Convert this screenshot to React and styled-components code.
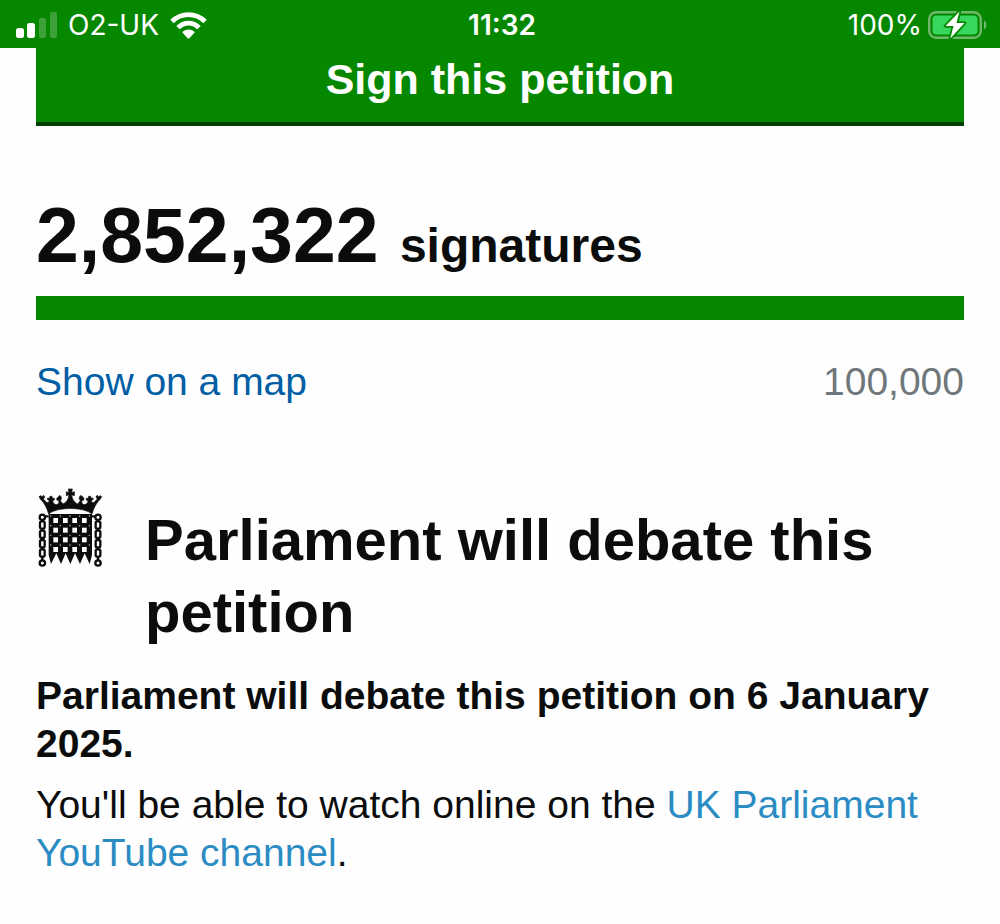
import React from "react";
import styled, { createGlobalStyle } from "styled-components";

const GlobalStyle = createGlobalStyle`
  *, *::before, *::after { box-sizing: border-box; }
  body {
    margin: 0;
    background: #fefefe;
    color: #0b0c0c;
    font-family: "Liberation Sans", Arial, Helvetica, sans-serif;
    font-size: 39px;
    line-height: 48px;
  }
`;

const StatusBar = styled.header`
  display: grid;
  grid-template-columns: 1fr auto 1fr;
  align-items: center;
  height: 48px;
  padding: 2px 12px 0 16px;
  background: #058700;
  color: #fff;
  font-family: Inter, "Liberation Sans", sans-serif;
  font-size: 28px;
  line-height: 32px;
`;

const StatusGroup = styled.div`
  display: flex;
  align-items: center;
  justify-content: ${(p) => (p.$end ? "flex-end" : "flex-start")};
  gap: ${(p) => (p.$end ? 6 : 11)}px;

  svg { display: block; flex: none; }
`;

const Clock = styled.time`
  font-weight: 600;
`;

const Page = styled.main`
  padding: 0 36px 40px;
`;

const SignButton = styled.button`
  display: block;
  width: 100%;
  padding: 6px 0 18px;
  border: 0;
  border-bottom: 4px solid #033f00;
  border-radius: 0;
  background: #058700;
  color: #fff;
  font: bold 43px/50px "Liberation Sans", Arial, sans-serif;
  cursor: pointer;
`;

const SignatureCount = styled.p`
  margin: 64px 0 5px;
  font-size: 48px;
  font-weight: bold;
  line-height: 90px;
`;

const Total = styled.span`
  margin-right: 8px;
  font-size: 77px;
`;

const Progress = styled.div`
  height: 24px;
  background: #058700;
`;

const ProgressDetails = styled.div`
  display: flex;
  justify-content: space-between;
  margin-top: 38px;
`;

const Threshold = styled.span`
  color: #6f777b;
`;

const Link = styled.a`
  color: ${(p) => (p.$light ? "#2b8cc4" : "#005ea5")};
  text-decoration: none;
`;

const DebateHeader = styled.div`
  display: flex;
  align-items: flex-start;
  gap: 41px;
  margin-top: 82px;

  svg { flex: none; }
`;

const Heading = styled.h2`
  margin: 16px 0 0;
  font-size: 58px;
  line-height: 72px;
`;

const Paragraph = styled.p`
  margin: ${(p) => (p.$lead ? 24 : 13)}px 0 0;
  font-weight: ${(p) => (p.$lead ? "bold" : "normal")};
`;

const SignalIcon = () => (
  <svg width="41" height="26" viewBox="0 0 41 26" fill="#fff" aria-hidden="true">
    <rect x="0" y="16" width="8" height="10" rx="2.5" />
    <rect x="11" y="11" width="8" height="15" rx="2.5" />
    <rect x="23" y="6" width="7" height="20" rx="2" opacity=".22" />
    <rect x="34" y="0" width="7" height="26" rx="2" opacity=".22" />
  </svg>
);

const WifiIcon = () => (
  <svg width="37" height="27" viewBox="0 0 37 27" aria-hidden="true">
    <g fill="none" stroke="#fff" strokeWidth="4.8">
      <path d="M2 9.5C11 .2 26 .2 35 9.5" />
      <path d="M8 15.7c6-6.2 15-6.2 21 0" />
    </g>
    <path fill="#fff" d="M12.2 20.2c3.5-3.7 9.1-3.7 12.6 0l-5.2 5.7c-.7.8-1.5.8-2.2 0z" />
  </svg>
);

const BatteryIcon = () => (
  <svg width="60" height="30" viewBox="0 0 60 30" role="img" aria-label="Charging">
    <rect x="1.2" y="2.2" width="51.6" height="25.6" rx="7" fill="none" stroke="#6fb96b" strokeWidth="2.4" />
    <rect x="4.5" y="5.5" width="45" height="19" rx="4" fill="#37d65c" />
    <path d="M56 10.5c3.2 1.8 3.2 7.2 0 9z" fill="#6fb96b" />
    <path
      d="M31.5 1.5 17.5 16h8l-3.2 12.5L36.5 13h-8z"
      fill="#fff"
      stroke="#058700"
      strokeWidth="3.5"
      strokeLinejoin="round"
      paintOrder="stroke"
    />
  </svg>
);

const Chain = ({ x }) => (
  <g>
    <circle cx={x} cy="112" r="8" />
    <path d={`M${x} 119v5M${x} 146v6M${x} 174v6M${x} 202v6M${x} 230v12`} />
    <rect x={x - 7} y="124" width="14" height="22" rx="5" />
    <rect x={x - 7} y="152" width="14" height="22" rx="5" />
    <rect x={x - 7} y="180" width="14" height="22" rx="5" />
    <rect x={x - 7} y="208" width="14" height="22" rx="5" />
    <circle cx={x} cy="249" r="8" />
  </g>
);

const rows = [114, 143, 172, 201];
const columns = [70, 99, 127, 156];

const Portcullis = () => (
  <svg width="68" height="80" viewBox="18 24 204 240" role="img" aria-label="UK Parliament">
    <path
      fill="#0b0c0c"
      stroke="#0b0c0c"
      strokeWidth="2"
      strokeLinejoin="round"
      d="M56 102 C51 84 42 67 31 57 L27 50 32 47 36 50 41 46 44 51 40 57 51 68 C57 68 59 64 56 60 L52 58 53 54 59 55 60 49 66 49 67 55 73 55 73 60 68 62 C69 70 75 76 82 73 C87 71 88 65 85 61 L81 61 80 55 85 51 89 46 94 51 94 58 91 62 99 72 C108 68 116 58 117 44 L109 47 109 35 117 38 115 27 127 27 125 38 133 35 133 47 125 44 C126 58 134 68 143 72 L151 62 148 58 148 51 153 46 158 51 162 55 161 61 157 61 C154 65 155 71 160 73 167 76 173 70 174 62 L169 60 169 55 175 55 176 49 182 49 183 55 189 54 190 58 186 60 C183 64 185 68 191 68 L202 57 198 51 201 46 206 50 210 47 215 50 211 57 C200 67 191 84 186 102 C163 80 79 80 56 102Z"
    />
    <path
      fill="#0b0c0c"
      d="M56 102h130v123l-7 27-15-32-14 32-15-32-14 32-14-32-14 32-14-32-16 32-7-27z"
    />
    <g fill="#fff">
      {rows.map((y) =>
        columns.map((x) => <rect key={`${x}-${y}`} x={x} y={y} width="14" height="15" />)
      )}
      {rows.map((y) =>
        [62, 91, 120, 149, 178].map((x) => (
          <circle key={`${x}-${y}`} cx={x} cy={y - 6} r="2" opacity=".8" />
        ))
      )}
    </g>
    <g fill="none" stroke="#0b0c0c" strokeWidth="7">
      <Chain x={37} />
      <Chain x={204} />
      <path d="M44 109h12M186 109h11" />
    </g>
  </svg>
);

export default function App() {
  return (
    <>
      <GlobalStyle />
      <StatusBar>
        <StatusGroup>
          <SignalIcon />
          <span>O2-UK</span>
          <WifiIcon />
        </StatusGroup>
        <Clock>11:32</Clock>
        <StatusGroup $end>
          <span>100%</span>
          <BatteryIcon />
        </StatusGroup>
      </StatusBar>
      <Page>
        <SignButton type="button">Sign this petition</SignButton>
        <SignatureCount>
          <Total>2,852,322</Total> signatures
        </SignatureCount>
        <Progress />
        <ProgressDetails>
          <Link href="#map">Show on a map</Link>
          <Threshold>100,000</Threshold>
        </ProgressDetails>
        <section>
          <DebateHeader>
            <Portcullis />
            <Heading>Parliament will debate this petition</Heading>
          </DebateHeader>
          <Paragraph $lead>Parliament will debate this petition on 6 January 2025.</Paragraph>
          <Paragraph>
            You'll be able to watch online on the{" "}
            <Link $light href="#youtube">UK Parliament YouTube channel</Link>.
          </Paragraph>
        </section>
      </Page>
    </>
  );
}
